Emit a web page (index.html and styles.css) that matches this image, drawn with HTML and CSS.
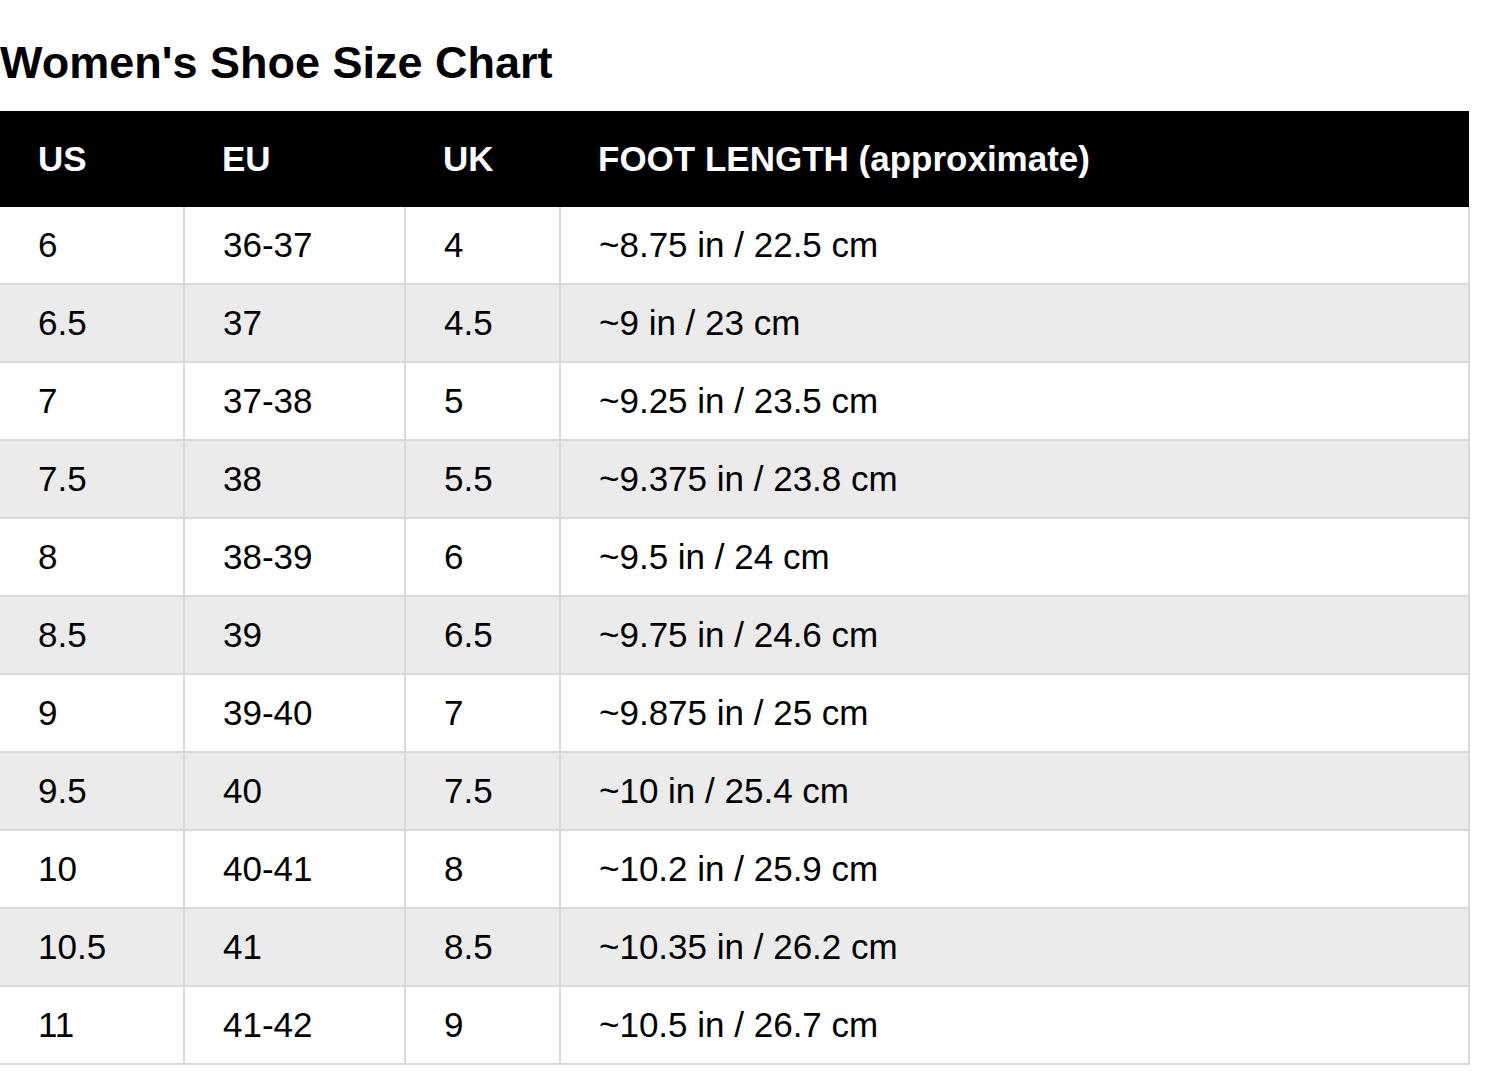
FILE: index.html
```html
<!DOCTYPE html>
<html lang="en">
<head>
<meta charset="utf-8">
<title>Women's Shoe Size Chart</title>
<link rel="stylesheet" href="styles.css">
</head>
<body>
<h1 class="title">Women's Shoe Size Chart</h1>
<table class="chart">
  <colgroup>
    <col class="c-us">
    <col class="c-eu">
    <col class="c-uk">
    <col class="c-len">
  </colgroup>
  <thead>
    <tr><th>US</th><th>EU</th><th>UK</th><th>FOOT LENGTH (approximate)</th></tr>
  </thead>
  <tbody>
    <tr><td>6</td><td>36-37</td><td>4</td><td>~8.75 in / 22.5 cm</td></tr>
    <tr><td>6.5</td><td>37</td><td>4.5</td><td>~9 in / 23 cm</td></tr>
    <tr><td>7</td><td>37-38</td><td>5</td><td>~9.25 in / 23.5 cm</td></tr>
    <tr><td>7.5</td><td>38</td><td>5.5</td><td>~9.375 in / 23.8 cm</td></tr>
    <tr><td>8</td><td>38-39</td><td>6</td><td>~9.5 in / 24 cm</td></tr>
    <tr><td>8.5</td><td>39</td><td>6.5</td><td>~9.75 in / 24.6 cm</td></tr>
    <tr><td>9</td><td>39-40</td><td>7</td><td>~9.875 in / 25 cm</td></tr>
    <tr><td>9.5</td><td>40</td><td>7.5</td><td>~10 in / 25.4 cm</td></tr>
    <tr><td>10</td><td>40-41</td><td>8</td><td>~10.2 in / 25.9 cm</td></tr>
    <tr><td>10.5</td><td>41</td><td>8.5</td><td>~10.35 in / 26.2 cm</td></tr>
    <tr><td>11</td><td>41-42</td><td>9</td><td>~10.5 in / 26.7 cm</td></tr>
  </tbody>
</table>
</body>
</html>
```

FILE: styles.css
```css
html, body {
  margin: 0;
  padding: 0;
  background: #ffffff;
}

body {
  font-family: "Liberation Sans", Arial, sans-serif;
  color: #000000;
}

.title {
  margin: 37px 0 22px 0;
  font-size: 45px;
  line-height: 52px;
  font-weight: bold;
}

.chart {
  border-collapse: collapse;
  table-layout: fixed;
  width: 1469px;
}

.c-us { width: 184px; }
.c-eu { width: 221px; }
.c-uk { width: 155px; }
.c-len { width: 909px; }

.chart th {
  background: #000000;
  color: #ffffff;
  font-size: 35px;
  font-weight: bold;
  text-align: left;
  height: 96px;
  padding: 0 0 0 38px;
  border: 0;
  vertical-align: middle;
  box-sizing: border-box;
}

.chart td {
  font-size: 35px;
  text-align: left;
  height: 76px;
  padding: 0 0 0 38px;
  border: 2px solid #d9d9d9;
  vertical-align: middle;
}

.chart td:first-child {
  border-left: 0;
}

.chart tbody tr:first-child td {
  border-top: 0;
}

.chart tbody tr:nth-child(even) td {
  background: #ebebeb;
}
```
